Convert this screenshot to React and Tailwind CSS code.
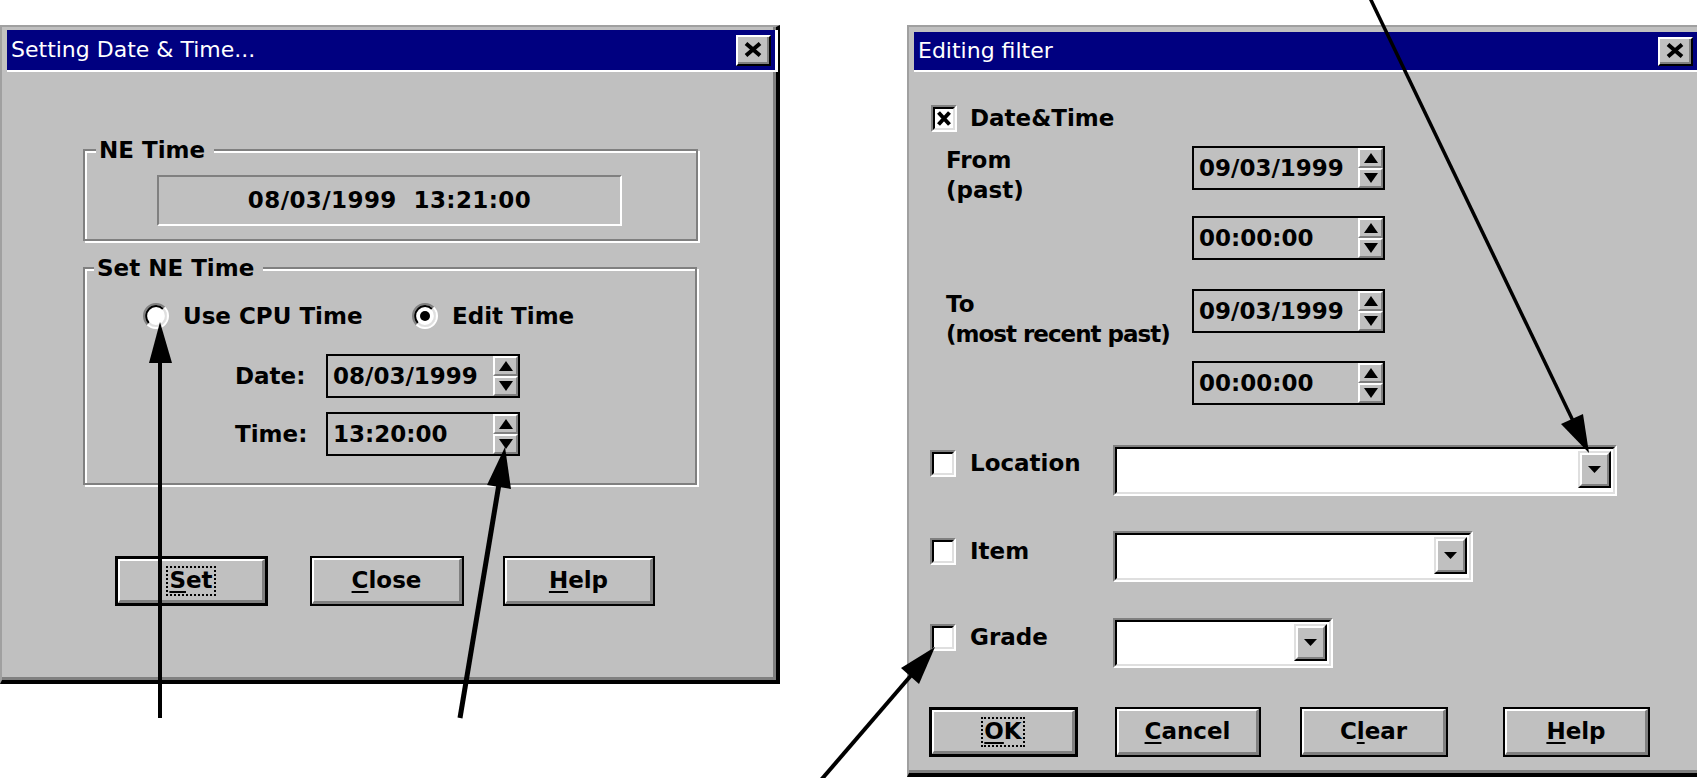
import React from "react";

function CloseBtn({ cls }) {
  return (
    <div className={`${cls} bg-[#c0c0c0] border-t-2 border-l-2 border-t-white border-l-white border-b-2 border-r-2 border-b-black border-r-black flex shrink-0`}>
      <div className="flex-1 border-b-2 border-r-2 border-b-[#808080] border-r-[#808080] flex items-center justify-center">
        <svg width="18" height="15" viewBox="0 0 18 15">
          <path d="M2 1.5 L16 13.5 M16 1.5 L2 13.5" stroke="black" strokeWidth="4" />
        </svg>
      </div>
    </div>
  );
}

function TitleBar({ title, barCls, mtCls, closeCls, prCls }) {
  return (
    <div className={`ml-[5px] ${mtCls} border-r-[3px] border-b-2 border-r-white border-b-white`}>
      <div className={`${barCls} bg-[#000080] flex items-center justify-between pl-[4px] ${prCls}`}>
        <span className="text-white text-[22px] font-normal leading-none">{title}</span>
        <CloseBtn cls={closeCls} />
      </div>
    </div>
  );
}

function Frame({ cls, children }) {
  return (
    <div className={`${cls} shrink-0 bg-[#c0c0c0] border-t-2 border-l-2 border-t-[#a0a0a0] border-l-[#a0a0a0] border-r-4 border-b-4 border-r-black border-b-black`}>
      <div className="h-full border-r-[3px] border-b-[3px] border-r-[#808080] border-b-[#808080] flex flex-col items-start">
        {children}
      </div>
    </div>
  );
}

function Radio({ on }) {
  return (
    <svg width="26" height="26" viewBox="0 0 26 26" className="shrink-0">
      <circle cx="13" cy="13" r="11" fill="white" />
      <path d="M4.51 21.49 A12 12 0 0 1 21.49 4.51" fill="none" stroke="#808080" strokeWidth="2" />
      <path d="M21.49 4.51 A12 12 0 0 1 4.51 21.49" fill="none" stroke="white" strokeWidth="2" />
      <path d="M5.93 20.07 A10 10 0 0 1 20.07 5.93" fill="none" stroke="black" strokeWidth="2" />
      <path d="M20.07 5.93 A10 10 0 0 1 5.93 20.07" fill="none" stroke="#dfdfdf" strokeWidth="2" />
      {on && <circle cx="13" cy="13" r="5" fill="black" />}
    </svg>
  );
}

function Check({ checked }) {
  return (
    <div className="w-[26px] h-[27px] shrink-0 border-t-2 border-l-2 border-t-[#808080] border-l-[#808080] border-b-2 border-r-2 border-b-white border-r-white">
      <div className="w-full h-full bg-white border-t-2 border-l-2 border-t-black border-l-black border-b-2 border-r-2 border-b-[#dfdfdf] border-r-[#dfdfdf] flex items-center justify-center">
        {checked && (
          <svg width="14" height="15" viewBox="0 0 14 15">
            <path d="M1.5 1.5 L12.5 13.5 M12.5 1.5 L1.5 13.5" stroke="black" strokeWidth="4" />
          </svg>
        )}
      </div>
    </div>
  );
}

function SpinHalf({ up }) {
  return (
    <div className="flex-1 bg-[#c0c0c0] border-t-2 border-l-2 border-t-white border-l-white border-b-2 border-r-2 border-b-[#808080] border-r-[#808080] flex items-center justify-center">
      <svg width="14" height="10" viewBox="0 0 14 10">
        {up ? <polygon points="7,0 14,10 0,10" fill="black" /> : <polygon points="0,0 14,0 7,10" fill="black" />}
      </svg>
    </div>
  );
}

function SpinField({ value, cls }) {
  return (
    <div className={`${cls} h-[44px] shrink-0 flex border-2 border-black bg-[#c0c0c0]`}>
      <div className="flex-1 pl-[5px] flex items-center leading-none">{value}</div>
      <div className="w-[25px] flex flex-col">
        <SpinHalf up />
        <SpinHalf />
      </div>
    </div>
  );
}

function DropBtn() {
  return (
    <div className="w-[33px] h-[37px] bg-[#c0c0c0] border-t-2 border-l-2 border-t-[#dfdfdf] border-l-[#dfdfdf] border-b-2 border-r-2 border-b-black border-r-black flex">
      <div className="flex-1 border-t-2 border-l-2 border-t-white border-l-white border-b-2 border-r-2 border-b-[#808080] border-r-[#808080] flex items-center justify-center">
        <svg width="13" height="7" viewBox="0 0 13 7">
          <polygon points="0,0 13,0 6.5,7" fill="black" />
        </svg>
      </div>
    </div>
  );
}

function Combo({ cls }) {
  return (
    <div className={`${cls} shrink-0 border-t-2 border-l-2 border-t-[#808080] border-l-[#808080] border-b-2 border-r-2 border-b-white border-r-white`}>
      <div className="h-full bg-white border-t-2 border-l-2 border-t-black border-l-black border-b-2 border-r-2 border-b-[#dfdfdf] border-r-[#dfdfdf] flex justify-end items-start pt-[2px] pr-[2px]">
        <DropBtn />
      </div>
    </div>
  );
}

function Btn({ cls, def, children }) {
  return (
    <div className={`${cls} h-[50px] shrink-0 ${def ? "border-[3px]" : "border-2"} border-black`}>
      <div className="h-full bg-[#c0c0c0] border-t-2 border-l-2 border-t-white border-l-white border-b-[3px] border-r-[3px] border-b-[#808080] border-r-[#808080] flex items-center justify-center leading-none">
        {children}
      </div>
    </div>
  );
}

function U({ children }) {
  return <span className="underline decoration-2 underline-offset-[3px]">{children}</span>;
}

function Focus({ children }) {
  return (
    <span className="border-2 border-dotted border-black px-[1px] h-[30px] flex items-center">{children}</span>
  );
}

function Group({ cls, label, labelCls, children }) {
  return (
    <div className={`${cls} border-2 border-[#808080] shadow-[2px_2px_0_#fff,inset_2px_2px_0_#fff] flex flex-col items-start`}>
      <div className={`-mt-[15px] ${labelCls} pl-[3px] pr-[9px] bg-[#c0c0c0] h-[28px] leading-[28px]`}>{label}</div>
      {children}
    </div>
  );
}

function LeftDialog() {
  return (
    <Frame cls="mt-[25px] w-[780px] h-[659px]">
      <TitleBar
        title="Setting Date & Time..."
        mtCls="mt-[3px] w-[771px]"
        barCls="h-[40px]"
        prCls="pr-[4px]"
        closeCls="w-[35px] h-[31px]"
      />
      <Group cls="ml-[81px] mt-[77px] w-[615px] h-[92px]" label="NE Time" labelCls="ml-[11px]">
        <div className="ml-[72px] mt-[11px] w-[465px] h-[51px] border-t-2 border-l-2 border-t-[#808080] border-l-[#808080] border-b-2 border-r-2 border-b-white border-r-white flex items-center justify-center whitespace-pre tracking-[0.4px] leading-none">
          {"08/03/1999  13:21:00"}
        </div>
      </Group>
      <Group cls="ml-[81px] mt-[26px] w-[614px] h-[218px]" label="Set NE Time" labelCls="ml-[9px]">
        <div className="mt-[20px] ml-[58px] h-[28px] flex items-center">
          <div className="w-[269px] flex items-center gap-[14px]">
            <Radio />
            <span>Use CPU Time</span>
          </div>
          <div className="flex items-center gap-[14px]">
            <Radio on />
            <span>Edit Time</span>
          </div>
        </div>
        <div className="mt-[24px] ml-[150px] flex items-center">
          <span className="w-[91px]">Date:</span>
          <SpinField value="08/03/1999" cls="w-[194px]" />
        </div>
        <div className="mt-[14px] ml-[150px] flex items-center">
          <span className="w-[91px]">Time:</span>
          <SpinField value="13:20:00" cls="w-[194px]" />
        </div>
      </Group>
      <div className="mt-[71px] ml-[113px] flex">
        <Btn cls="w-[153px]" def>
          <Focus>
            <U>S</U>et
          </Focus>
        </Btn>
        <Btn cls="ml-[42px] w-[154px]">
          <U>C</U>lose
        </Btn>
        <Btn cls="ml-[39px] w-[152px]">
          <U>H</U>elp
        </Btn>
      </div>
    </Frame>
  );
}

function RightDialog() {
  return (
    <Frame cls="mt-[25px] ml-[127px] w-[797px] h-[752px]">
      <TitleBar
        title="Editing filter"
        mtCls="mt-[5px] w-[788px]"
        barCls="h-[38px]"
        prCls="pr-[6px]"
        closeCls="w-[35px] h-[29px]"
      />
      <div className="mt-[32px] ml-[22px] h-[28px] flex items-center gap-[13px]">
        <Check checked />
        <span>Date&amp;Time</span>
      </div>
      <div className="mt-[14px] h-[44px] flex items-start">
        <div className="ml-[37px] w-[246px] -mt-px leading-[30px]">
          <div>From</div>
          <div>(past)</div>
        </div>
        <SpinField value="09/03/1999" cls="w-[193px]" />
      </div>
      <div className="mt-[26px] h-[44px] flex items-start">
        <SpinField value="00:00:00" cls="ml-[283px] w-[193px]" />
      </div>
      <div className="mt-[29px] h-[44px] flex items-start">
        <div className="ml-[37px] w-[246px] leading-[30px]">
          <div>To</div>
          <div className="tracking-[-1px] whitespace-nowrap">(most recent past)</div>
        </div>
        <SpinField value="09/03/1999" cls="w-[193px]" />
      </div>
      <div className="mt-[28px] h-[44px] flex items-start">
        <SpinField value="00:00:00" cls="ml-[283px] w-[193px]" />
      </div>
      <div className="mt-[40px] h-[51px] flex items-start">
        <div className="ml-[21px] w-[183px] mt-[4px] h-[28px] flex items-center gap-[14px]">
          <Check />
          <span>Location</span>
        </div>
        <Combo cls="w-[504px] h-[51px]" />
      </div>
      <div className="mt-[35px] h-[51px] flex items-start">
        <div className="ml-[21px] w-[183px] mt-[6px] h-[28px] flex items-center gap-[14px]">
          <Check />
          <span>Item</span>
        </div>
        <Combo cls="w-[360px] h-[51px]" />
      </div>
      <div className="mt-[36px] h-[50px] flex items-start">
        <div className="ml-[21px] w-[183px] mt-[5px] h-[28px] flex items-center gap-[14px]">
          <Check />
          <span>Grade</span>
        </div>
        <Combo cls="w-[220px] h-[50px]" />
      </div>
      <div className="mt-[39px] ml-[20px] flex">
        <Btn cls="w-[149px]" def>
          <Focus>
            <U>O</U>K
          </Focus>
        </Btn>
        <Btn cls="ml-[37px] w-[146px]">
          <U>C</U>ancel
        </Btn>
        <Btn cls="ml-[39px] w-[148px]">
          C<U>l</U>ear
        </Btn>
        <Btn cls="ml-[55px] w-[147px]">
          <U>H</U>elp
        </Btn>
      </div>
    </Frame>
  );
}

export default function App() {
  return (
    <div className="relative w-[1697px] h-[778px] overflow-hidden bg-white text-black font-['DejaVu_Sans',sans-serif] font-bold text-[23px] leading-[28px]">
      <div className="flex items-start">
        <LeftDialog />
        <RightDialog />
      </div>
      <svg className="absolute left-0 top-0 pointer-events-none" width="1697" height="778" viewBox="0 0 1697 778">
        <line x1="160" y1="718" x2="160" y2="350" stroke="black" strokeWidth="4" />
        <polygon points="160,322 149,363 172,363" fill="black" />
        <line x1="460" y1="718" x2="500" y2="478" stroke="black" strokeWidth="5" />
        <polygon points="505,447 487,485 511,489" fill="black" />
        <line x1="1370" y1="-2" x2="1575" y2="425" stroke="black" strokeWidth="3.5" />
        <polygon points="1589,453 1583,414 1561,424" fill="black" />
        <line x1="821" y1="780" x2="914" y2="672" stroke="black" strokeWidth="4" />
        <polygon points="935,647 919,684 901,668" fill="black" />
      </svg>
    </div>
  );
}
